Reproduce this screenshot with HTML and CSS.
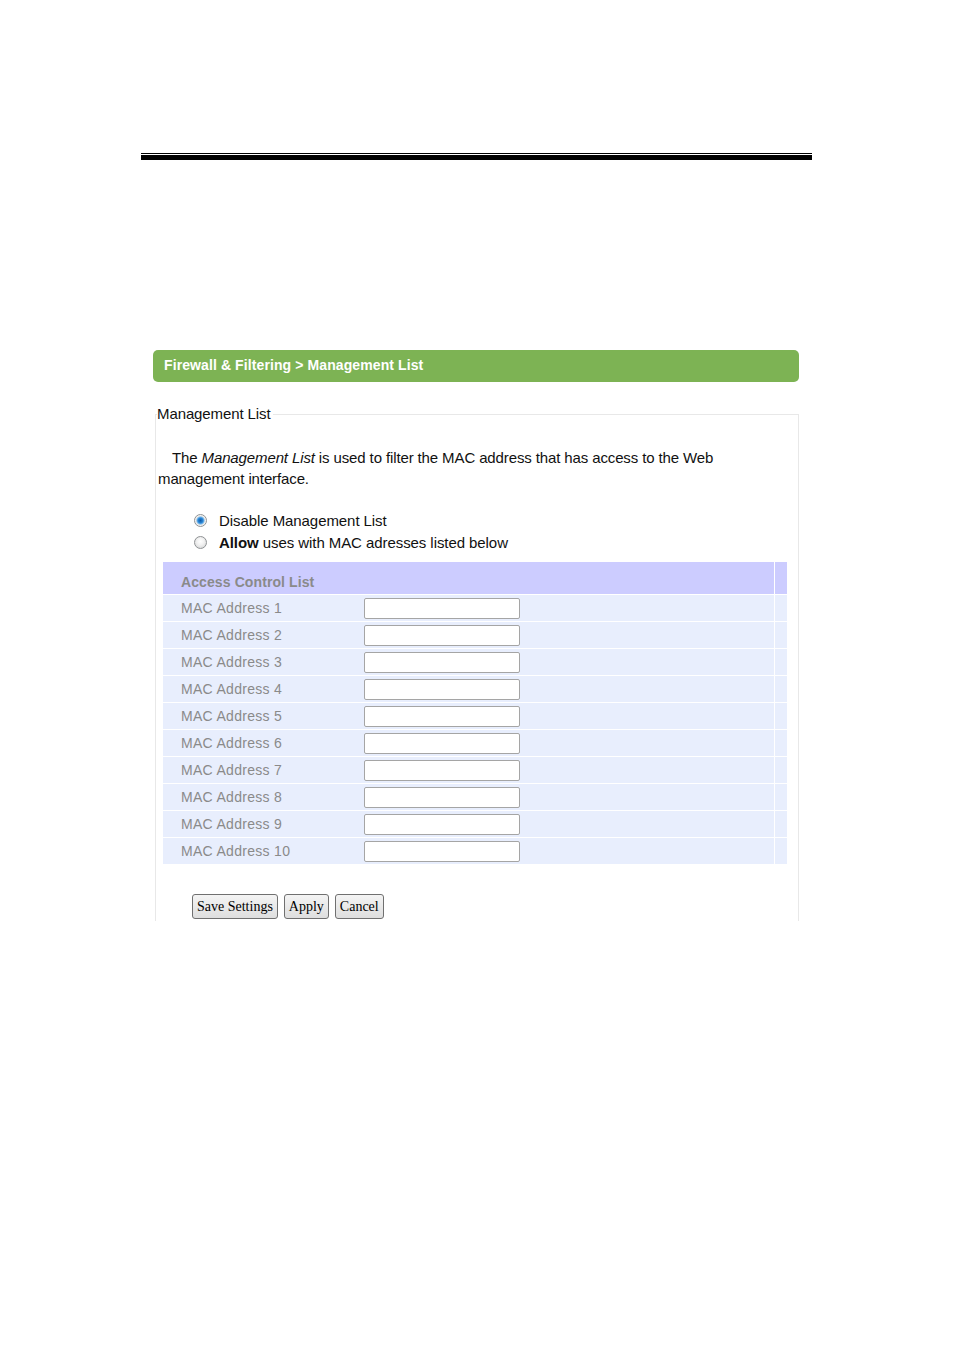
FILE: index.html
```html
<!DOCTYPE html>
<html>
<head>
<meta charset="utf-8">
<link rel="stylesheet" href="styles.css">
</head>
<body>
<div class="page">
  <div class="rule"></div>
  <div class="content">
    <div class="titlebar">Firewall &amp; Filtering &gt; Management List</div>
    <fieldset class="fs">
      <legend class="legend">Management List</legend>
      <p class="intro">The <i>Management List</i> is used to filter the MAC address that has access to the Web management interface.</p>
      <div class="radios">
        <label class="radio-row"><input class="radio" type="radio" name="mode" checked><span>Disable Management List</span></label>
        <label class="radio-row"><input class="radio" type="radio" name="mode"><span><b>Allow</b> uses with MAC adresses listed below</span></label>
      </div>
      <div class="acl">
        <div class="acl-row head"><div class="main">Access Control List</div><div class="end"></div></div>
        <div class="acl-row"><div class="main"><span class="lbl">MAC Address 1</span><input class="mac" type="text"></div><div class="end"></div></div>
        <div class="acl-row"><div class="main"><span class="lbl">MAC Address 2</span><input class="mac" type="text"></div><div class="end"></div></div>
        <div class="acl-row"><div class="main"><span class="lbl">MAC Address 3</span><input class="mac" type="text"></div><div class="end"></div></div>
        <div class="acl-row"><div class="main"><span class="lbl">MAC Address 4</span><input class="mac" type="text"></div><div class="end"></div></div>
        <div class="acl-row"><div class="main"><span class="lbl">MAC Address 5</span><input class="mac" type="text"></div><div class="end"></div></div>
        <div class="acl-row"><div class="main"><span class="lbl">MAC Address 6</span><input class="mac" type="text"></div><div class="end"></div></div>
        <div class="acl-row"><div class="main"><span class="lbl">MAC Address 7</span><input class="mac" type="text"></div><div class="end"></div></div>
        <div class="acl-row"><div class="main"><span class="lbl">MAC Address 8</span><input class="mac" type="text"></div><div class="end"></div></div>
        <div class="acl-row"><div class="main"><span class="lbl">MAC Address 9</span><input class="mac" type="text"></div><div class="end"></div></div>
        <div class="acl-row"><div class="main"><span class="lbl">MAC Address 10</span><input class="mac" type="text"></div><div class="end"></div></div>
      </div>
      <div class="buttons">
        <button class="btn" type="button">Save Settings</button>
        <button class="btn" type="button">Apply</button>
        <button class="btn" type="button">Cancel</button>
      </div>
    </fieldset>
  </div>
</div>
</body>
</html>
```

FILE: styles.css
```css
html, body {
  margin: 0;
  padding: 0;
  background: #ffffff;
}
body {
  font-family: "Liberation Sans", Arial, sans-serif;
  font-size: 15px;
  color: #111;
}
.page {
  padding-top: 153px;
  height: 1197px;
}
.rule {
  margin-left: 141px;
  width: 671px;
  height: 1px;
  border-top: 1px solid #000;
  border-bottom: 5px solid #000;
}
.content {
  margin-left: 153px;
  width: 646px;
  margin-top: 190px;
}
.titlebar {
  height: 32px;
  line-height: 31px;
  background: #7db354;
  border-radius: 5px;
  color: #fff;
  font-weight: bold;
  font-size: 14px;
  padding-left: 11px;
  letter-spacing: 0.1px;
}
.fs {
  margin: 23px 0 0 2px;
  padding: 0 0 0 1px;
  width: 644px;
  height: 516px;
  box-sizing: border-box;
  border: 1px solid #e8e8e8;
  border-bottom: none;
  min-width: 0;
}
.legend {
  padding: 0 2px 0 0;
  margin-left: 0;
  line-height: 18px;
  font-size: 15px;
  letter-spacing: -0.1px;
}
.intro {
  margin: 24px 0 0 1px;
  width: 580px;
  line-height: 21px;
  text-indent: 14px;
  letter-spacing: -0.12px;
}
.radios {
  margin-top: 20px;
  padding-left: 36px;
}
.radio-row {
  display: flex;
  align-items: center;
  height: 22px;
  letter-spacing: -0.07px;
}
.radio {
  appearance: none;
  -webkit-appearance: none;
  margin: 0 12px 0 1px;
  width: 13px;
  height: 13px;
  box-sizing: border-box;
  border-radius: 50%;
  border: 1px solid #8f9294;
  background: radial-gradient(circle at 50% 40%, #ffffff 0, #f2f2f2 40%, #cfd0d1 100%);
}
.radio:checked {
  background: radial-gradient(circle at 50% 50%, #0f5aa8 0, #2b86d6 2.5px, #73b6ea 3.5px, #e6e7e8 4.5px, #fafafa 5.5px, #d2d3d4 100%);
}
.acl {
  margin: 9px 0 0 6px;
  width: 624px;
  display: flex;
  flex-direction: column;
  gap: 1px;
  font-size: 14px;
}
.acl-row {
  display: flex;
  gap: 1px;
  height: 26px;
}
.acl-row .main {
  flex: 1;
  display: flex;
  align-items: center;
  background: #e8eefd;
}
.acl-row .end {
  width: 12px;
  background: #e8eefd;
}
.acl-row.head {
  height: 32px;
}
.acl-row.head .main,
.acl-row.head .end {
  background: #ccccff;
}
.acl-row.head .main {
  padding-left: 18px;
  padding-top: 7px;
  font-weight: bold;
  color: #8a8a8a;
  letter-spacing: 0.1px;
}
.lbl {
  width: 183px;
  padding-left: 18px;
  color: #8a8a8a;
  letter-spacing: 0.3px;
}
.mac {
  width: 156px;
  height: 21px;
  box-sizing: border-box;
  margin: 0;
  border: 1px solid #a5a5a5;
  border-radius: 2px;
  background: #fff;
}
.buttons {
  margin: 30px 0 0 35px;
  display: flex;
  gap: 6px;
}
.btn {
  height: 25px;
  padding: 0 4px;
  font-family: "Liberation Serif", "Times New Roman", serif;
  font-size: 14px;
  color: #000;
  border: 1px solid #707070;
  border-radius: 3px;
  background: linear-gradient(#f4f4f4, #dedede);
}
```
